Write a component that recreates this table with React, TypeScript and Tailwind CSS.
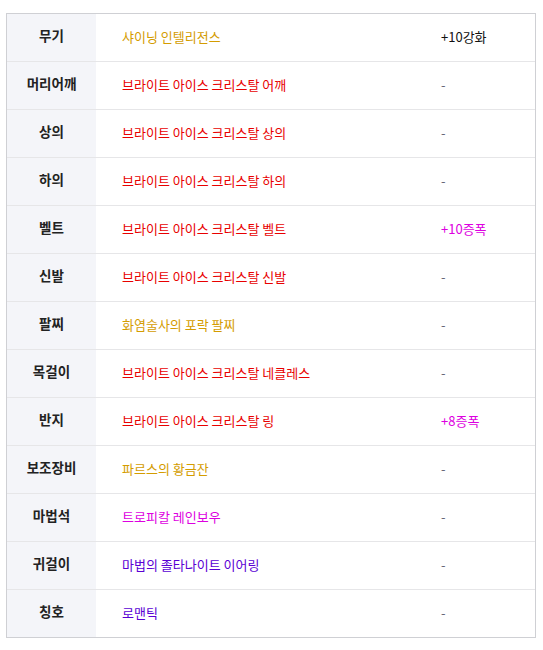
const GOLD = "text-[#d49c00]"
const RED = "text-[#e80000]"
const PINK = "text-[#dd00e0]"
const PURPLE = "text-[#5a00d4]"

type Row = {slot: string; item: string; color: string; extra: string; extraColor?: string}

const rows: Row[] = [
  {slot: "무기", item: "샤이닝 인텔리전스", color: GOLD, extra: "+10강화", extraColor: "text-[#111]"},
  {slot: "머리어깨", item: "브라이트 아이스 크리스탈 어깨", color: RED, extra: "-"},
  {slot: "상의", item: "브라이트 아이스 크리스탈 상의", color: RED, extra: "-"},
  {slot: "하의", item: "브라이트 아이스 크리스탈 하의", color: RED, extra: "-"},
  {slot: "벨트", item: "브라이트 아이스 크리스탈 벨트", color: RED, extra: "+10증폭", extraColor: PINK},
  {slot: "신발", item: "브라이트 아이스 크리스탈 신발", color: RED, extra: "-"},
  {slot: "팔찌", item: "화염술사의 포락 팔찌", color: GOLD, extra: "-"},
  {slot: "목걸이", item: "브라이트 아이스 크리스탈 네클레스", color: RED, extra: "-"},
  {slot: "반지", item: "브라이트 아이스 크리스탈 링", color: RED, extra: "+8증폭", extraColor: PINK},
  {slot: "보조장비", item: "파르스의 황금잔", color: GOLD, extra: "-"},
  {slot: "마법석", item: "트로피칼 레인보우", color: PINK, extra: "-"},
  {slot: "귀걸이", item: "마법의 졸타나이트 이어링", color: PURPLE, extra: "-"},
  {slot: "칭호", item: "로맨틱", color: PURPLE, extra: "-"},
]

export default function App() {
  return (
    <div
      className="min-h-[650px] w-[543px] bg-white pt-[13px] pl-[6px]"
      style={{fontFamily: '"Noto Sans CJK KR", "Noto Sans", sans-serif'}}
    >
      <div className="w-[530px] border border-[#cfd0d4]">
        {rows.map((r, i) => (
          <div
            key={r.slot}
            className={`grid h-12 grid-cols-[89px_319px_1fr] ${i > 0 ? "border-t border-[#e6e6e8]" : "h-[47px]"}`}
          >
            <div className="flex items-center justify-center bg-[#f4f5f9] pb-[4px] text-[13.5px] font-bold text-[#222]">
              {r.slot}
            </div>
            <div className={`flex items-center pl-[26px] pb-[2px] text-[13px] ${r.color}`}>{r.item}</div>
            <div className={`flex items-center pl-[26px] pb-[2px] text-[13px] ${r.extraColor ?? "text-[#667]"}`}>
              {r.extra}
            </div>
          </div>
        ))}
      </div>
    </div>
  )
}
